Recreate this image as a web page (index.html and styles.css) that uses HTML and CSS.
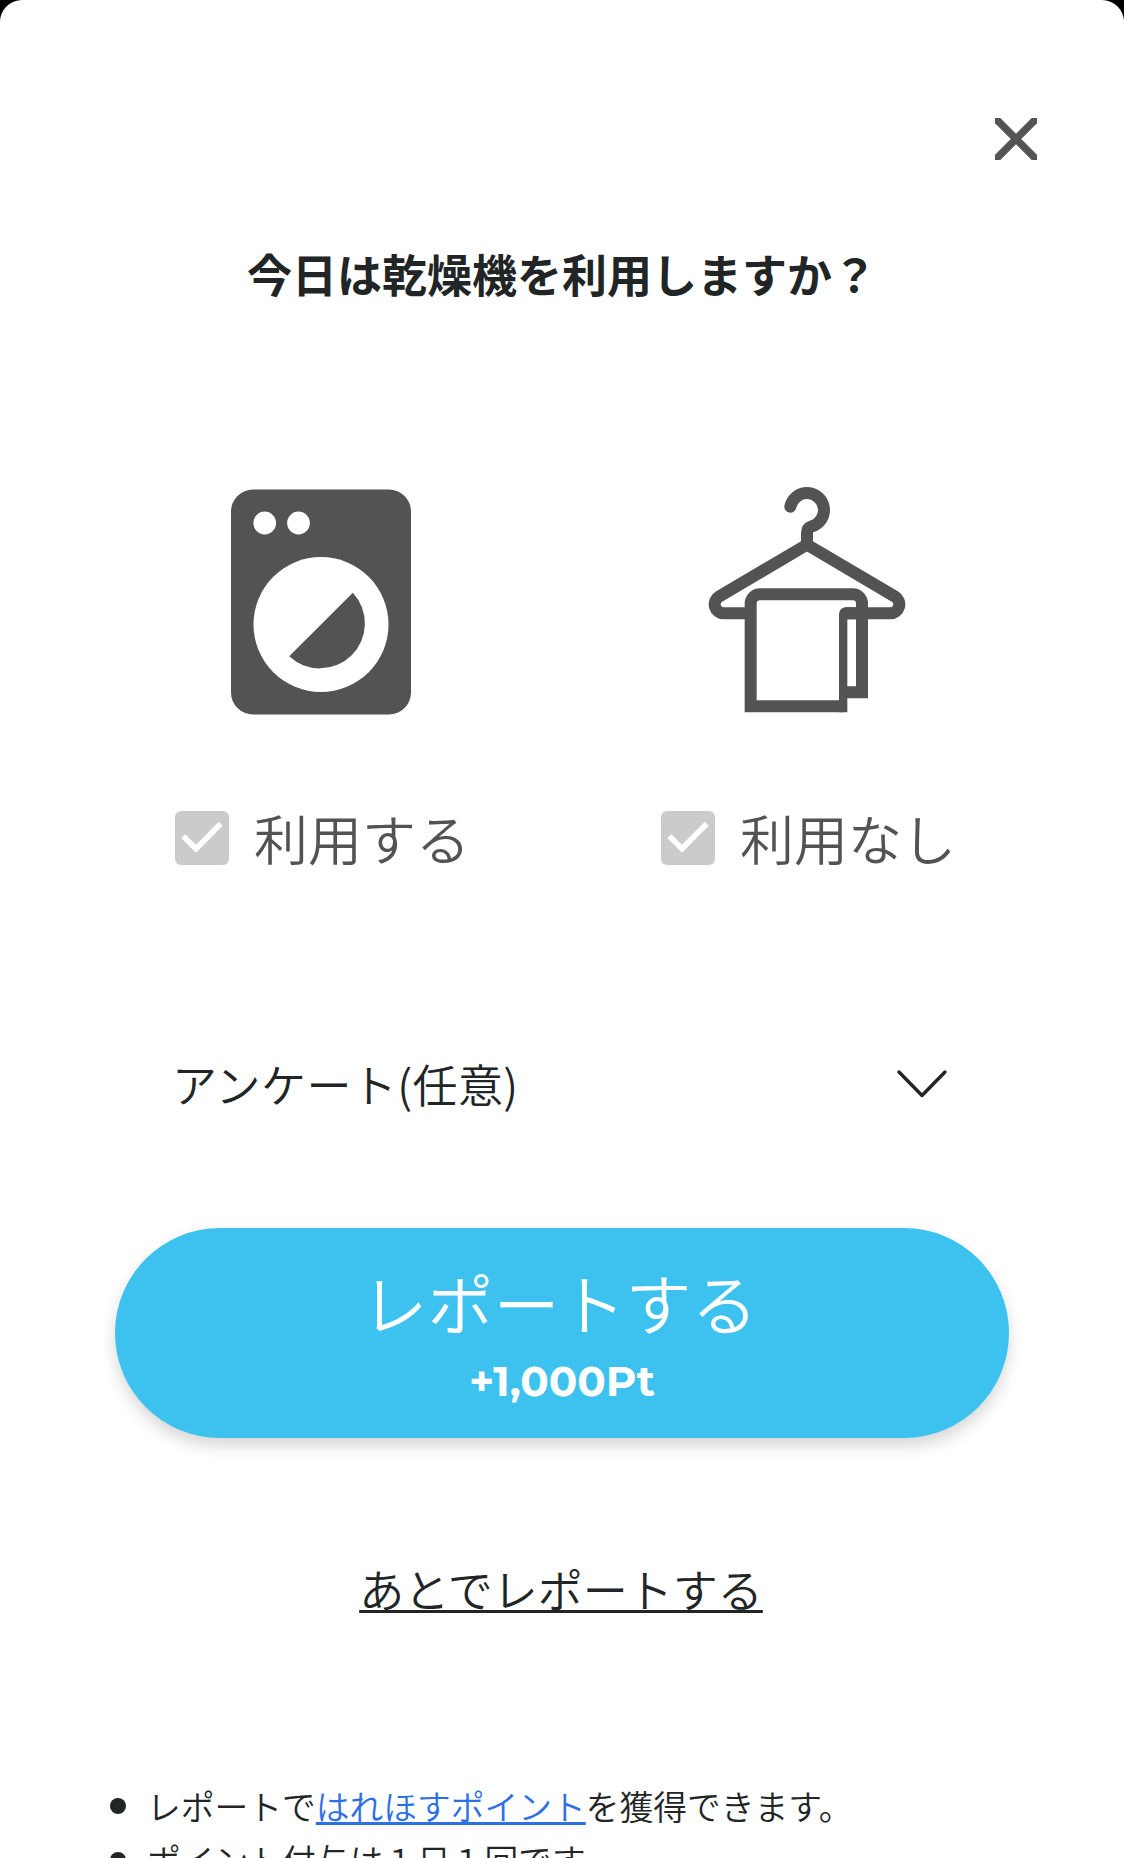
FILE: index.html
```html
<!DOCTYPE html>
<html lang="ja">
<head>
  <meta charset="UTF-8" />
  <meta name="viewport" content="width=device-width, initial-scale=1.0" />
  <title>今日は乾燥機を利用しますか？</title>
  <link rel="stylesheet" href="styles.css">
</head>
<body>
  <div class="modal">
    <div class="modal-header">
      <button class="close" aria-label="閉じる">
        <svg width="42" height="42" viewBox="0 0 42 42">
          <path d="M0 0L42 42M42 0L0 42" stroke="#545454" stroke-width="7.5" />
        </svg>
      </button>
    </div>

    <h1 class="title">今日は乾燥機を利用しますか？</h1>

    <div class="choices">
      <div class="choice">
        <svg class="choice-icon" width="180" height="226" viewBox="0 0 180 226">
          <rect y="0.5" width="180" height="225" rx="22" fill="#535353" />
          <circle cx="33.7" cy="34" r="11.4" fill="#fff" />
          <circle cx="67.5" cy="34" r="11.4" fill="#fff" />
          <circle cx="90" cy="135.5" r="67.5" fill="#fff" />
          <path d="M121.8 103.7A45 45 0 0 1 58.2 167.3Z" fill="#535353" />
        </svg>
        <label class="choice-label">
          <span class="checkbox">
            <svg width="54" height="54" viewBox="0 0 54 54"><path d="M8.3 25.2L21 37.8L45.7 12.8" /></svg>
          </span>
          利用する
        </label>
      </div>
      <div class="choice">
        <svg class="choice-icon" width="196" height="226" viewBox="58 56 588 678">
          <g fill="none" stroke="#535353" stroke-width="36">
            <path d="M302 109A51 51 0 1 1 367 168Q352 172 352 188" stroke-linecap="round" />
            <path d="M352 184V226" />
            <path d="M166 429H102A27 27 0 0 1 88.6 378.6L352 223L615.4 378.6A27 27 0 0 1 602 429H466" />
            <path d="M460 708H183V400A28 28 0 0 1 211 372H489A28 28 0 0 1 517 400V666H472" />
          </g>
          <path d="M448 726V431A20 20 0 0 1 468 411H500V447H473V726Z" fill="#535353" />
        </svg>
        <label class="choice-label">
          <span class="checkbox">
            <svg width="54" height="54" viewBox="0 0 54 54"><path d="M8.3 25.2L21 37.8L45.7 12.8" /></svg>
          </span>
          利用なし
        </label>
      </div>
    </div>

    <div class="survey">
      <span>アンケート(任意)</span>
      <svg width="50" height="28" viewBox="0 0 50 28">
        <path d="M2 2L25 25.5L48 2" fill="none" stroke="#212526" stroke-width="3.4" stroke-linecap="round" stroke-linejoin="round" />
      </svg>
    </div>

    <button class="report">
      <span class="report-text">レポートする</span>
      <span class="report-point">+1,000Pt</span>
    </button>

    <a class="later">あとでレポートする</a>

    <ul class="notes">
      <li>レポートで<a class="link">はれほすポイント</a>を獲得できます。</li>
      <li>ポイント付与は１日１回です。</li>
    </ul>
  </div>
</body>
</html>
```

FILE: styles.css
```css
* {
  box-sizing: border-box;
}
body {
  margin: 0;
  height: 1858px;
  overflow: hidden;
  background: #000;
  color: #212526;
  font-family: "Noto Sans CJK JP", sans-serif;
  font-weight: 350;
}
button {
  border: 0;
  padding: 0;
  font-family: inherit;
}
svg {
  display: block;
  overflow: visible;
}
.modal {
  display: flex;
  flex-direction: column;
  align-items: center;
  height: 1858px;
  overflow: hidden;
  background: #fff;
  border-radius: 22px 22px 0 0;
}
.modal > * {
  flex-shrink: 0;
}
.modal-header {
  display: flex;
  justify-content: flex-end;
  width: 100%;
  padding: 118px 87px 0 0;
}
.close {
  background: none;
}
.close svg {
  overflow: hidden;
}
.title {
  margin: 80px 0 0;
  font-size: 45px;
  font-weight: 700;
  line-height: 68px;
}
.choices {
  display: grid;
  grid-template-columns: 486px 486px;
  margin-top: 181px;
  padding-left: 3px;
}
.choice {
  display: flex;
  flex-direction: column;
  align-items: center;
}
.choice-label {
  display: flex;
  align-items: center;
  gap: 25px;
  margin-top: 83px;
  padding-left: 4px;
  color: #535353;
  font-size: 54px;
  line-height: 80px;
}
.checkbox {
  width: 54px;
  height: 54px;
  background: #cbcbcb;
  border-radius: 6px;
}
.checkbox path {
  fill: none;
  stroke: #fff;
  stroke-width: 5.6;
}
.survey {
  display: flex;
  justify-content: space-between;
  align-items: center;
  width: 776px;
  margin-top: 172px;
  padding-right: 3px;
  font-size: 45px;
  line-height: 68px;
}
.survey span {
  margin-left: -2px;
  letter-spacing: 0.4px;
}
.report {
  display: flex;
  flex-direction: column;
  align-items: center;
  width: 894px;
  height: 210px;
  margin-top: 110px;
  padding-top: 28px;
  border-radius: 105px;
  background: #3dc2f0;
  color: #fff;
  box-shadow: 0 8px 16px rgba(0, 0, 0, 0.16);
}
.report-text {
  margin-left: -5px;
  font-size: 66px;
  font-weight: 350;
  line-height: 90px;
}
.report-point {
  font-family: Montserrat, Inter, sans-serif;
  font-size: 42px;
  font-weight: 700;
  line-height: 70px;
}
.later {
  margin: 117px 2px 0 0;
  font-size: 45px;
  line-height: 68px;
  text-decoration: underline;
  text-decoration-thickness: 3px;
  text-underline-offset: 2px;
  text-decoration-skip-ink: none;
}
.notes {
  align-self: flex-start;
  margin: 156px 0 0;
  padding: 0 0 0 110px;
  list-style: none;
  font-size: 33.75px;
  line-height: 54px;
}
.notes li {
  display: flex;
  align-items: center;
}
.notes li::before {
  content: "";
  width: 16px;
  height: 16px;
  margin-right: 21px;
  border-radius: 50%;
  background: #212526;
}
.link {
  color: #2c6fe6;
  text-decoration: underline;
  text-decoration-thickness: 3px;
  text-underline-offset: 2px;
  text-decoration-skip-ink: none;
}
```
